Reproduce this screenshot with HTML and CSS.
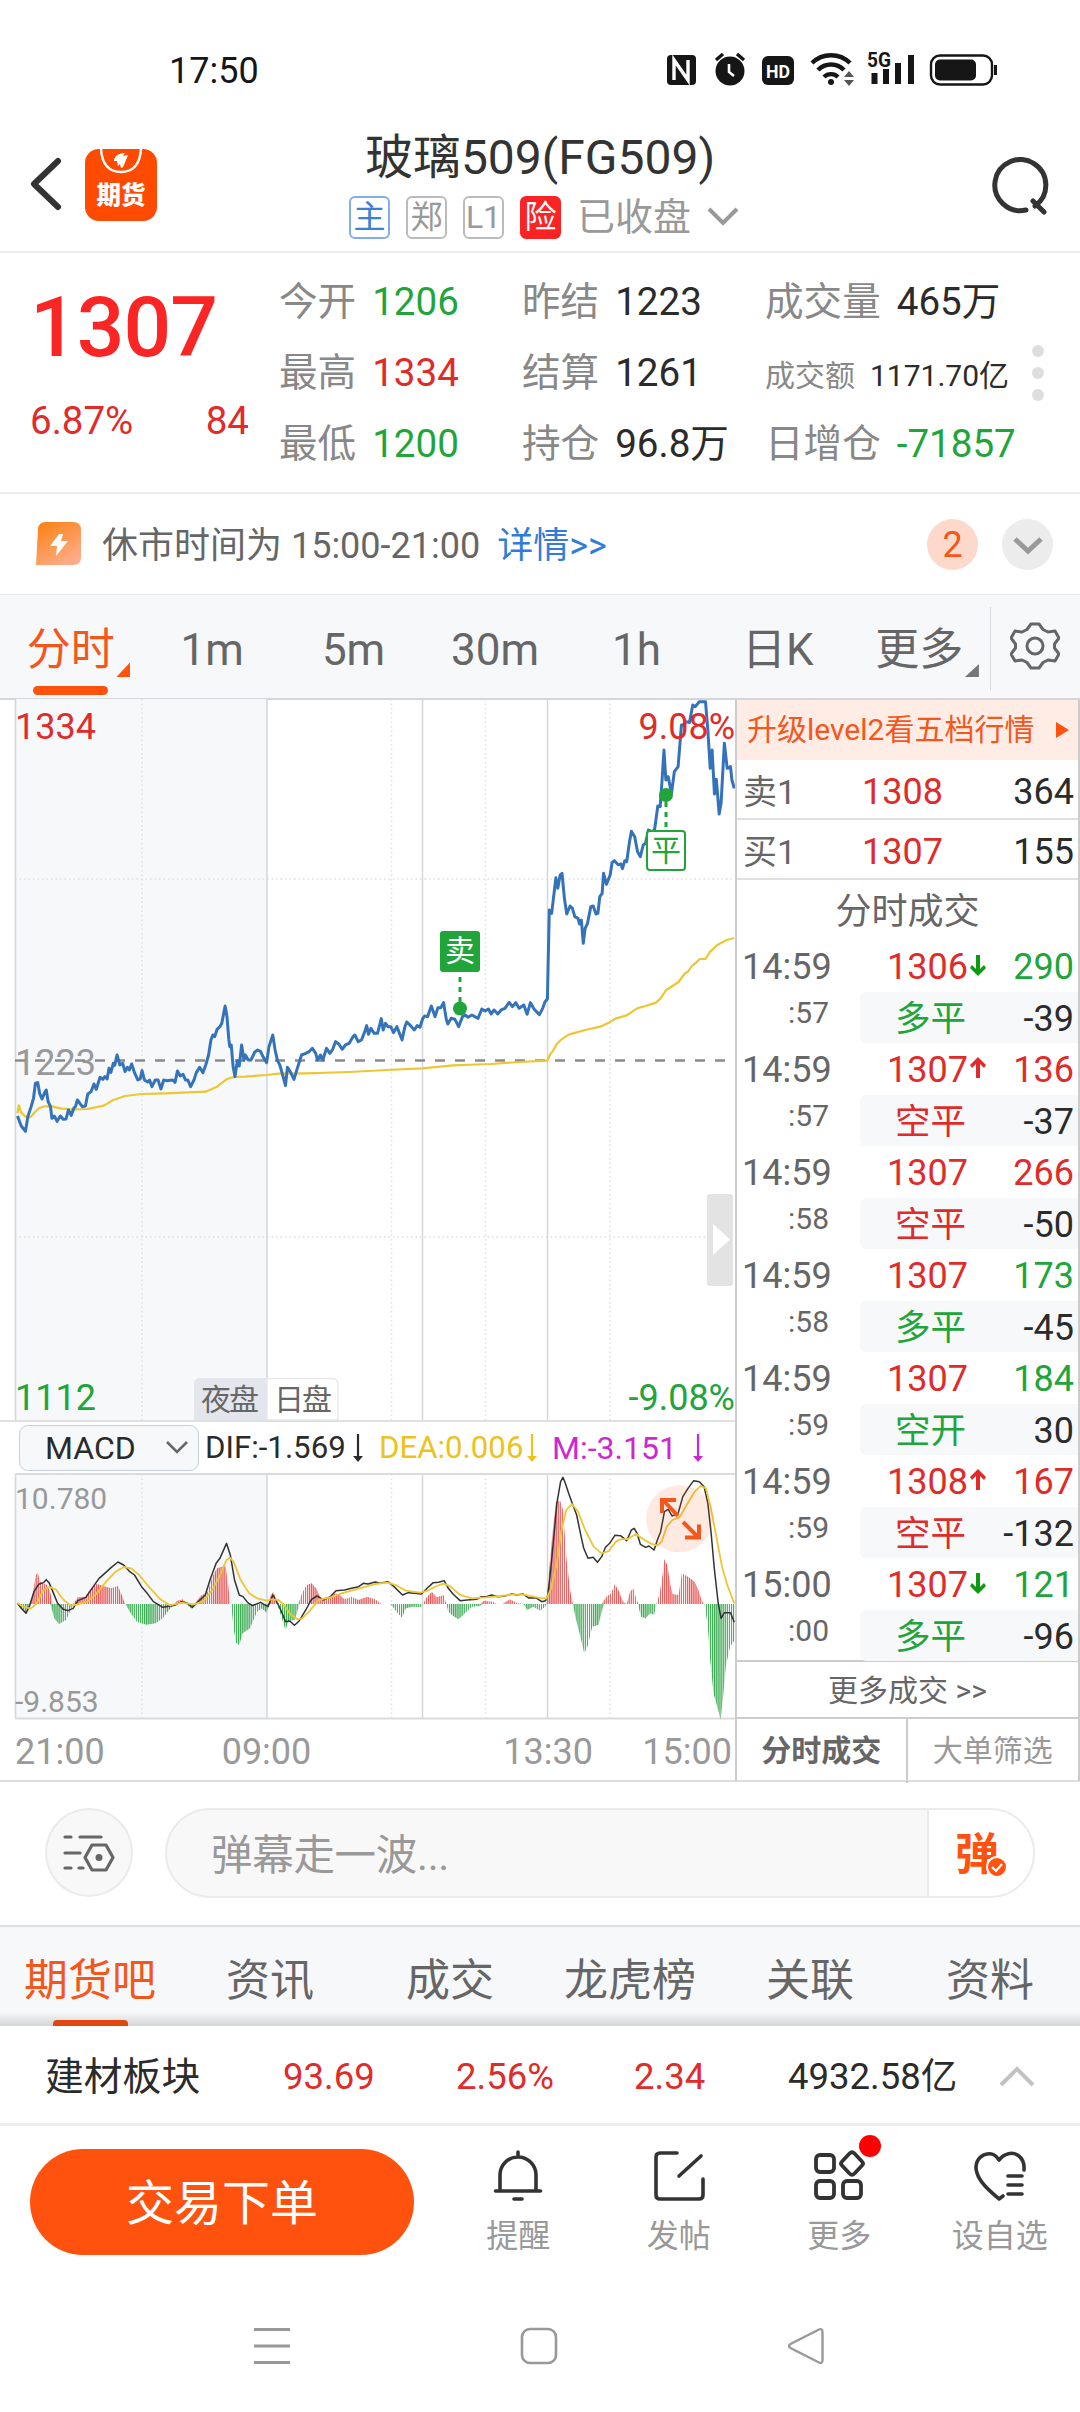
FILE: index.html
```html
<!DOCTYPE html>
<html lang="zh-CN">
<head>
<meta charset="utf-8">
<meta name="viewport" content="width=1080">
<title>玻璃509(FG509)</title>
<link rel="stylesheet" href="styles.css">
</head>
<body>
<div class="screen">

  <div class="status">
    <span class="clock">17:50</span>
    <svg class="status-icons" width="340" height="44" viewBox="660 46 340 44">
      <rect x="667" y="55" width="29" height="30" rx="4" fill="#161616"/>
      <path d="M674 80V60l14 20V60" fill="none" stroke="#fff" stroke-width="3.4"/>
      <circle cx="730" cy="71" r="14.5" fill="#161616"/>
      <path d="M716 60l7-6M744 60l-7-6" stroke="#161616" stroke-width="3.4"/>
      <path d="M729 64v8l5 4" fill="none" stroke="#fff" stroke-width="2.6"/>
      <rect x="762" y="56" width="32" height="29" rx="6" fill="#161616"/>
      <text x="778" y="77.500" text-anchor="middle" font-size="19" font-weight="700" fill="#fff" textLength="24" lengthAdjust="spacingAndGlyphs">HD</text>
      <g fill="none" stroke="#161616" stroke-width="4.400">
        <path d="M812 63a27 27 0 0 1 38 0"/>
        <path d="M818 70a18 18 0 0 1 26 0"/>
        <path d="M824 77a10 10 0 0 1 14 0"/>
      </g>
      <circle cx="831" cy="82" r="3" fill="#161616"/>
      <path d="M844 77l5-6 5 6zM844 80l5 6 5-6z" fill="#555"/>
      <text x="867" y="67" font-size="20" font-weight="700" fill="#161616" textLength="24" lengthAdjust="spacingAndGlyphs">5G</text>
      <path d="M874.500 73v11M886 69v15M898 63v21M911 55v29" stroke="#161616" stroke-width="6" fill="none"/>
      <rect x="931" y="55.500" width="61" height="29" rx="9" fill="none" stroke="#161616" stroke-width="2.400"/>
      <rect x="935" y="59.500" width="41" height="21" rx="5" fill="#161616"/>
      <path d="M995.500 65v10" stroke="#161616" stroke-width="3"/>
    </svg>
  </div>

  <header class="header">
    <svg class="back" width="34" height="56" viewBox="0 0 34 56"><path d="M29 4L5 27l24 23" fill="none" stroke="#333" stroke-width="6" stroke-linecap="round" stroke-linejoin="round"/></svg>
    <div class="logo">
      <svg width="72" height="26" viewBox="0 0 72 26"><path d="M16 0c1 15 8 23 20 23S55 15 56 0" fill="none" stroke="#fff" stroke-width="2.400"/><path d="M29 12c0-4 4-8 11-8l-2 3 5-1-4 10c-1 3-3 3-3 3l-1-4-2 2-1-5z" fill="#fff"/></svg>
      <b>期货</b>
    </div>
    <div class="heading">
      <h1>玻璃509(FG509)</h1>
      <div class="tags">
        <span class="tag blue">主</span><span class="tag">郑</span><span class="tag">L1</span><span class="tag risk">险</span>
        <span class="state">已收盘</span>
        <svg width="32" height="20" viewBox="0 0 32 20"><path d="M2 2l14 14L30 2" fill="none" stroke="#999" stroke-width="4"/></svg>
      </div>
    </div>
    <svg class="search" width="60" height="60" viewBox="0 0 60 60"><path d="M36 53A25.500 25.500 0 1 1 45 49M43 44l11 11" fill="none" stroke="#333" stroke-width="5" stroke-linecap="round"/></svg>
  </header>

  <section class="quote">
    <div class="last">
      <strong>1307</strong>
      <div class="change"><span>6.87%</span><span>84</span></div>
    </div>
    <dl class="stats">
      <div><dt>今开</dt><dd class="down">1206</dd></div>
      <div><dt>昨结</dt><dd>1223</dd></div>
      <div><dt>成交量</dt><dd>465万</dd></div>
      <div><dt>最高</dt><dd class="up">1334</dd></div>
      <div><dt>结算</dt><dd>1261</dd></div>
      <div class="small"><dt>成交额</dt><dd>1171.70亿</dd></div>
      <div><dt>最低</dt><dd class="down">1200</dd></div>
      <div><dt>持仓</dt><dd>96.8万</dd></div>
      <div><dt>日增仓</dt><dd class="down">-71857</dd></div>
    </dl>
    <div class="dots"><i></i><i></i><i></i></div>
  </section>

  <section class="notice">
    <svg width="46" height="44" viewBox="0 0 46 44">
      <defs><linearGradient id="bolt" x1="0" y1="0" x2=".6" y2="1"><stop offset="0" stop-color="#fb7f0c"/><stop offset="1" stop-color="#ffab86"/></linearGradient></defs>
      <path d="M10 0h27q8 0 8 8v27q0 8-8 8H0L2 8q0-8 8-8z" fill="url(#bolt)"/>
      <path d="M23 12l-9 12h7l-1 10 12-15h-7l2-7z" fill="#fff"/>
    </svg>
    <span class="notice-text">休市时间为 15:00-21:00</span>
    <a>详情&gt;&gt;</a>
    <span class="count">2</span>
    <span class="more"><svg width="32" height="20" viewBox="0 0 32 20"><path d="M3 3l13 12L29 3" fill="none" stroke="#999" stroke-width="5"/></svg></span>
  </section>

  <nav class="periods">
    <span class="on">分时</span><span>1m</span><span>5m</span><span>30m</span><span>1h</span><span>日K</span><span class="drop">更多</span>
    <div class="gear"><svg width="50" height="52" viewBox="-25 -26 50 52"><path d="M-4-22h8l4 5.500 5 2.500 7-1 4 7-4.500 6 0 4 4.500 6-4 7-7-1-5 2.500-4 5.500H-4l-4-5.500-5-2.500-7 1-4-7 4.500-6 0-4-4.500-6 4-7 7 1 5-2.500z" fill="none" stroke="#666" stroke-width="3" stroke-linejoin="round"/><circle r="8" fill="none" stroke="#666" stroke-width="3"/></svg></div>
  </nav>

  <main class="market">
    <div class="charts">
      <svg class="price" width="735" height="721" viewBox="0 699 735 721">
        <rect x="15" y="699" width="252" height="721" fill="#f6f8fa"/>
        <path d="M142 699v721M391.500 699v721M485.500 699v721M610 699v721M15 879h720M15 1237h720" stroke="#dfdfdf" stroke-width="1.500" stroke-dasharray="1.500 3" fill="none"/>
        <path d="M15.500 699v721M267 699v721M422.500 699v721M547.500 699v721" stroke="#d4d6d9" stroke-width="1.500"/>
        <text x="15" y="1075" class="axis mute">1223</text>
        <path d="M15 1060.500h720" stroke="#8a8a8a" stroke-width="2.400" stroke-dasharray="10 10"/>
        <g transform="translate(0 880) scale(.4719 .3333)" fill="none" stroke-linejoin="round">
          <polyline vector-effect="non-scaling-stroke" stroke="#edc633" stroke-width="2.200" points="37,700 40,676 45,698 54,710 64,712 72,700 82,685 95,679 112,680 130,686 155,688 185,687 220,677 240,660 265,648 300,642 350,640 436,635 460,620 480,598 495,591 520,590 565,585 590,581 650,580 740,576 820,570 895,565 960,556 1040,552 1100,546 1160,542 1165,525 1172,512 1180,492 1190,478 1205,464 1220,458 1240,450 1272,440 1290,428 1306,415 1328,406 1350,385 1368,378 1390,368 1400,355 1412,330 1425,318 1438,306 1450,282 1458,275 1466,258 1475,248 1483,237 1495,237 1505,215 1520,195 1540,180 1556,174"/>
          <polyline vector-effect="non-scaling-stroke" stroke="#3473ba" stroke-width="3" points="37,708 45,738 54,754 59,710 66,680 71,655 75,610 80,608 84,640 89,657 94,640 98,630 102,665 107,680 110,715 115,708 121,724 128,708 134,718 140,717 145,690 151,706 157,683 160,680 164,660 170,672 175,680 181,678 186,642 193,635 199,612 204,628 212,592 218,598 222,590 227,597 231,565 235,577 240,550 243,556 248,525 254,555 260,550 265,575 270,562 274,570 279,552 285,578 292,600 297,597 301,572 306,600 313,606 317,600 322,620 329,600 335,600 341,627 347,600 353,602 366,600 371,607 376,573 382,588 388,583 393,600 398,600 404,620 411,600 416,578 423,562 430,578 436,555 442,525 447,480 451,465 455,470 460,448 466,440 470,430 477,378 481,410 485,480 487,500 490,495 494,560 498,590 503,542 507,558 512,495 517,540 520,525 526,540 532,540 540,516 546,510 552,514 558,532 565,548 570,500 578,465 583,510 588,542 593,555 598,580 605,617 609,562 615,575 623,598 630,565 639,525 648,520 655,515 662,505 669,520 673,540 679,525 684,540 692,505 699,520 705,508 711,485 718,492 725,508 732,495 740,490 748,470 752,465 759,485 766,480 773,455 777,437 781,463 786,445 793,460 800,460 808,416 812,450 817,430 822,440 828,440 834,458 841,440 852,480 858,440 862,426 870,437 878,450 884,437 890,442 896,415 900,408 906,410 914,378 922,410 928,383 934,383 940,368 946,420 949,432 956,415 964,418 972,440 980,410 986,405 992,412 1000,405 1013,415 1021,387 1028,393 1035,387 1041,402 1047,390 1055,402 1062,390 1070,385 1079,367 1086,380 1093,368 1100,385 1110,375 1117,403 1124,368 1132,388 1143,404 1150,385 1155,365 1160,357 1164,90 1169,100 1178,-7 1182,25 1187,-15 1191,-20 1196,55 1201,102 1208,78 1213,85 1218,110 1225,115 1228,132 1232,120 1236,190 1240,145 1245,130 1252,80 1257,78 1263,102 1267,100 1271,50 1276,40 1279,-20 1285,13 1293,-15 1297,-52 1302,-58 1310,-46 1316,-48 1319,-34 1324,-58 1328,-55 1334,-115 1338,-146 1345,-130 1351,-85 1357,-70 1363,-105 1368,-110 1374,-150 1381,-145 1387,-150 1394,-222 1399,-220 1403,-300 1407,-390 1411,-300 1416,-310 1423,-260 1429,-325 1437,-340 1444,-465 1448,-465 1454,-475 1461,-472 1468,-525 1473,-520 1482,-535 1495,-535 1500,-450 1505,-335 1509,-390 1514,-258 1518,-302 1524,-198 1528,-230 1535,-410 1541,-335 1548,-340 1551,-300 1556,-275"/>
        </g>
        <path d="M460 977v28M666 802v28" stroke="#21a53b" stroke-width="3" stroke-dasharray="5 5"/>
        <circle cx="460" cy="1008.500" r="7" fill="#21a53b"/>
        <circle cx="666" cy="795" r="7" fill="#21a53b"/>
        <rect x="440" y="931" width="40" height="41" rx="3" fill="#21a53b"/>
        <text x="460" y="961" text-anchor="middle" font-size="30" fill="#fff">卖</text>
        <rect x="647" y="831" width="38" height="39" rx="3" fill="#fff" stroke="#21a53b" stroke-width="2"/>
        <text x="666" y="861" text-anchor="middle" font-size="30" fill="#21a53b">平</text>
        <text x="15" y="739" class="axis rise">1334</text>
        <text x="735" y="739" text-anchor="end" class="axis rise">9.08%</text>
        <text x="15" y="1410" class="axis fall">1112</text>
        <text x="735" y="1410" text-anchor="end" class="axis fall">-9.08%</text>
        <path d="M267 1378h-67q-6 0-6 6v36h73z" fill="#e3e6ed"/>
        <path d="M267 1378.500h65q6 0 6 6v35.500h-71z" fill="#fff" stroke="#e9e9ec" stroke-width="1.500"/>
        <text x="201" y="1410" font-size="30" fill="#666" textLength="58">夜盘</text>
        <text x="274" y="1410" font-size="30" fill="#666" textLength="58">日盘</text>
        <rect x="707" y="1194" width="26" height="92" rx="3" fill="#e3e3e3"/>
        <path d="M713 1224l17 15.500-17 15.500z" fill="#fff"/>
      </svg>

      <div class="indicator">
        <span class="pick">MACD<svg width="24" height="16" viewBox="0 0 24 16"><path d="M2 2l10 10L22 2" fill="none" stroke="#666" stroke-width="2.600"/></svg></span>
        <span class="val dif">DIF:-1.569<svg width="10" height="28" viewBox="0 0 10 28"><path d="M5 0v24" stroke="currentColor" stroke-width="2.200"/><path d="M0 22h10l-5 6z" fill="currentColor"/></svg></span>
        <span class="val dea">DEA:0.006<svg width="10" height="28" viewBox="0 0 10 28"><path d="M5 0v24" stroke="currentColor" stroke-width="2.200"/><path d="M0 22h10l-5 6z" fill="currentColor"/></svg></span>
        <span class="val bar">M:-3.151<svg width="10" height="28" viewBox="0 0 10 28"><path d="M5 0v24" stroke="currentColor" stroke-width="2.200"/><path d="M0 22h10l-5 6z" fill="currentColor"/></svg></span>
      </div>

      <svg class="macd" width="735" height="247" viewBox="0 1473 735 247">
        <defs>
          <pattern id="redbar" width="4.425" height="900" patternUnits="userSpaceOnUse"><rect width="2.700" height="900" fill="#e85a5a"/></pattern>
          <pattern id="greenbar" width="4.425" height="900" patternUnits="userSpaceOnUse"><rect width="2.700" height="900" fill="#3fac55"/></pattern>
        </defs>
        <rect x="15" y="1474" width="252" height="245" fill="#f6f8fa"/>
        <path d="M142 1474v245M391.500 1474v245M485.500 1474v245M610 1474v245" stroke="#dfdfdf" stroke-width="1.500" stroke-dasharray="1.500 3"/>
        <path d="M15.500 1474v245M267 1474v245M422.500 1474v245M547.500 1474v245" stroke="#d4d6d9" stroke-width="1.500"/>
        <path d="M15 1474h720M15 1718.500h720" stroke="#d9dbdd" stroke-width="2"/>
        <text x="15" y="1509" class="axis low">10.780</text>
        <text x="15" y="1711.500" class="axis low">-9.853</text>
        <g transform="translate(0 1460) scale(.4719 .3333)" stroke-linejoin="round">
          <path fill="url(#redbar)" d="M64,432 70,400 76,345 80,338 85,365 100,375 107,400 111,432zM155,432 165,412 180,410 190,390 205,372 235,385 250,378 258,405 265,432zM370,432 375,422 388,418 395,432zM412,432 425,408 440,395 450,350 460,325 470,320 478,318 484,380 488,432zM568,432 574,405 579,395 585,415 590,432zM632,432 640,400 650,375 660,370 670,385 680,415 700,412 710,400 720,405 730,418 745,410 760,420 778,410 795,418 808,432zM896,432 905,410 915,395 925,412 940,405 946,432zM1018,432 1025,422 1045,425 1052,432zM1065,432 1080,418 1095,428 1110,432zM1158,432 1163,340 1170,230 1178,125 1187,122 1193,150 1200,290 1208,390 1214,432zM1275,432 1285,410 1295,400 1303,372 1312,395 1320,425 1328,432 1335,395 1342,385 1348,415 1353,432zM1391,432 1398,400 1404,345 1408,297 1414,315 1420,370 1425,402 1438,405 1445,340 1458,350 1472,365 1480,390 1488,425 1493,432z"/>
          <path fill="url(#greenbar)" d="M37,432 48,450 55,460 62,440 64,432zM107,432 115,475 125,492 140,480 150,450 155,432zM266,432 275,455 290,485 310,494 330,490 345,475 358,450 370,432zM395,432 407,448 412,432zM490,432 495,505 500,548 507,555 514,520 530,505 537,480 545,455 555,445 565,458 570,432zM588,432 596,470 605,510 612,482 625,480 632,445 634,432zM828,432 840,455 852,473 860,445 875,440 893,442 896,432zM946,432 950,455 960,468 972,478 985,460 1000,440 1018,437 1022,432zM1110,432 1117,450 1130,440 1145,452 1155,440 1158,432zM1214,432 1220,475 1230,530 1238,580 1245,560 1255,500 1268,495 1276,450 1280,432zM1352,432 1358,470 1368,475 1378,460 1386,465 1391,432zM1493,432 1500,500 1505,600 1512,700 1520,740 1527,779 1533,700 1538,620 1547,560 1556,542 1557,432z"/>
          <g fill="none">
            <polyline vector-effect="non-scaling-stroke" stroke="#333" stroke-width="1.500" points="37,430 45,445 55,460 62,440 72,395 82,373 92,368 98,359 104,368 112,395 122,430 134,448 144,452 155,445 165,422 182,412 195,385 210,355 222,340 236,322 250,306 262,315 275,335 285,345 300,380 312,400 325,425 345,442 370,436 385,425 395,428 408,442 420,425 435,405 445,360 458,310 466,295 480,250 488,285 497,360 507,405 515,410 525,428 535,437 552,427 568,440 578,405 590,435 598,460 605,485 614,483 624,496 634,483 648,450 660,418 672,408 685,420 700,410 712,392 730,390 745,385 760,380 770,370 780,372 795,366 806,370 822,365 835,380 853,405 865,398 878,400 893,402 905,385 918,368 930,367 941,362 950,385 960,402 975,422 990,420 1010,418 1020,410 1030,410 1042,405 1055,410 1070,408 1085,402 1095,405 1108,402 1120,414 1135,413 1148,425 1156,422 1161,405 1167,330 1173,240 1180,130 1188,65 1193,52 1198,70 1205,100 1214,135 1222,165 1230,220 1237,265 1246,295 1257,292 1266,307 1275,290 1283,262 1292,250 1303,226 1315,227 1328,242 1338,210 1344,205 1350,220 1357,253 1368,262 1375,258 1386,270 1393,240 1400,215 1408,155 1416,148 1424,168 1437,160 1447,110 1458,85 1470,62 1482,65 1492,80 1500,130 1507,220 1514,330 1522,430 1528,475 1535,458 1548,458 1556,487"/>
            <polyline vector-effect="non-scaling-stroke" stroke="#edc633" stroke-width="1.800" points="37,430 50,440 65,446 78,430 92,390 105,381 118,388 135,420 150,437 165,433 185,425 205,400 225,365 245,335 262,321 278,325 295,345 315,380 340,418 360,436 385,428 410,433 430,425 450,390 465,350 480,300 487,293 495,305 510,360 528,400 545,415 565,422 575,418 590,420 602,435 615,462 630,478 640,475 655,455 675,420 700,412 720,402 745,392 770,382 795,372 822,368 838,375 860,392 890,398 905,393 925,378 940,371 955,380 975,405 1000,415 1030,412 1060,408 1090,403 1110,404 1140,413 1158,416 1168,385 1180,310 1190,210 1200,150 1212,132 1225,155 1240,210 1258,260 1275,280 1290,273 1305,245 1315,238 1330,237 1348,222 1360,235 1378,250 1393,257 1402,245 1413,200 1425,180 1440,172 1455,135 1472,95 1485,78 1496,85 1506,140 1518,230 1530,320 1540,370 1556,430"/>
          </g>
        </g>
        <circle cx="679.500" cy="1518.700" r="33.500" fill="#ff520e" fill-opacity=".12"/>
        <path d="M678 1516l-15-16M662 1513v-13h14M683 1522l15 15M685 1537.500h14v-13" fill="none" stroke="#f4571c" stroke-width="4"/>
      </svg>
      <div class="times"><span>21:00</span><span>09:00</span><span>13:30</span><span>15:00</span></div>
    </div>

    <aside class="book">
      <div class="upgrade">升级level2看五档行情<svg width="14" height="16" viewBox="0 0 14 16"><path d="M0 0l13 8-13 8z" fill="#ff520e"/></svg></div>
      <div class="level"><span>卖1</span><b>1308</b><i>364</i></div>
      <div class="level"><span>买1</span><b>1307</b><i>155</i></div>
      <div class="book-title">分时成交</div>
      <div class="ticks">
        <div class="tick"><time>14:59</time><b class="dn">1306</b><em class="down">290</em><small>:57</small><p><span class="down">多平</span><i>-39</i></p></div>
        <div class="tick"><time>14:59</time><b class="rs">1307</b><em class="up">136</em><small>:57</small><p><span class="up">空平</span><i>-37</i></p></div>
        <div class="tick"><time>14:59</time><b>1307</b><em class="up">266</em><small>:58</small><p><span class="up">空平</span><i>-50</i></p></div>
        <div class="tick"><time>14:59</time><b>1307</b><em class="down">173</em><small>:58</small><p><span class="down">多平</span><i>-45</i></p></div>
        <div class="tick"><time>14:59</time><b>1307</b><em class="down">184</em><small>:59</small><p><span class="down">空开</span><i>30</i></p></div>
        <div class="tick"><time>14:59</time><b class="rs">1308</b><em class="up">167</em><small>:59</small><p><span class="up">空平</span><i>-132</i></p></div>
        <div class="tick"><time>15:00</time><b class="dn">1307</b><em class="down">121</em><small>:00</small><p><span class="down">多平</span><i>-96</i></p></div>
      </div>
      <div class="more-ticks">更多成交 &gt;&gt;</div>
      <div class="switch"><b>分时成交</b><span>大单筛选</span></div>
    </aside>
  </main>

  <section class="danmu">
    <span class="danmu-set"><svg width="52" height="40" viewBox="0 0 52 40"><g fill="none" stroke="#666" stroke-width="3.200" stroke-linecap="round"><path d="M2 4h6M17 4h21M2 20h15M2 35h6M16 35h4"/><path d="M29 12h14l7 12.500-7 12.500H29l-7-12.500z" stroke-linejoin="round"/></g><circle cx="36" cy="24.500" r="3.500" fill="#666"/></svg></span>
    <div class="danmu-box">
      <span class="hint">弹幕走一波...</span>
      <span class="send"><b>弹</b><svg width="22" height="22" viewBox="0 0 22 22"><circle cx="11" cy="11" r="10" fill="#ff520e" stroke="#fff" stroke-width="2"/><path d="M6 11l4 4 6-7" fill="none" stroke="#fff" stroke-width="2.200"/></svg></span>
    </div>
  </section>

  <nav class="sections"><span class="on">期货吧</span><span>资讯</span><span>成交</span><span>龙虎榜</span><span>关联</span><span>资料</span></nav>

  <section class="sector">
    <span class="name">建材板块</span><span class="up">93.69</span><span class="up">2.56%</span><span class="up">2.34</span><span class="amount">4932.58亿</span>
    <svg width="36" height="22" viewBox="0 0 36 22"><path d="M2 19L18 3l16 16" fill="none" stroke="#c2c2c2" stroke-width="4"/></svg>
  </section>

  <footer class="actions">
    <button class="trade">交易下单</button>
    <div class="act">
      <svg width="56" height="56" viewBox="0 0 56 56"><g fill="none" stroke="#333" stroke-width="3.600" stroke-linecap="round"><path d="M28 4v5M10 42V27a18 18 0 0 1 36 0v15M5.500 43h45M24 51h8"/></g></svg>
      <span>提醒</span>
    </div>
    <div class="act">
      <svg width="56" height="56" viewBox="0 0 56 56"><g fill="none" stroke="#333" stroke-width="3.600" stroke-linecap="round" stroke-linejoin="round"><path d="M26 5H9q-4 0-4 4v38q0 4 4 4h39q4 0 4-4V31M28 28L50 8"/></g></svg>
      <span>发帖</span>
    </div>
    <div class="act hot">
      <svg width="56" height="56" viewBox="0 0 56 56"><g fill="none" stroke="#333" stroke-width="3.800" stroke-linejoin="round"><rect x="5" y="7" width="18" height="17" rx="4"/><rect x="5" y="33" width="18" height="17" rx="4"/><rect x="32" y="33" width="18" height="17" rx="4"/><path d="M38.500 5.500q2.500-2.500 5 0l7.500 8q2 2 0 4l-7.500 8q-2.500 2.500-5 0l-7.500-8q-2-2 0-4z"/></g></svg>
      <span>更多</span>
    </div>
    <div class="act">
      <svg width="56" height="56" viewBox="0 0 56 56"><g fill="none" stroke="#333" stroke-width="3.600" stroke-linecap="round" stroke-linejoin="round"><path d="M52 22c1-13-9-20-19-15-3 1-4 3-6 5-3-5-8-7-12-6C6 8 2 16 5 25c3 10 13 18 22 26l4-3M36 28h14M36 37h14M36 46h14"/></g></svg>
      <span>设自选</span>
    </div>
  </footer>

  <div class="sysnav">
    <svg width="38" height="38" viewBox="0 0 38 38"><path d="M1 2.500h36M1 19h36M1 35.500h36" stroke="#999" stroke-width="2.800"/></svg>
    <svg width="38" height="38" viewBox="0 0 38 38"><rect x="2" y="2" width="34" height="34" rx="8" fill="none" stroke="#999" stroke-width="2.600"/></svg>
    <svg width="38" height="38" viewBox="0 0 38 38"><path d="M32 2.500Q35.500 1 35.500 5v28q0 4-3.500 2.500L3.500 21q-3-2 0-4z" fill="none" stroke="#999" stroke-width="2.400"/></svg>
  </div>
</div>
</body>
</html>
```
FILE: styles.css
```css
* { box-sizing: border-box; margin: 0; padding: 0; }

body {
  width: 1080px;
  background: #fff;
  color: #2b2b2b;
  font-family: Roboto, "Noto Sans CJK SC", sans-serif;
}

svg { display: block; flex: none; }
i, em { font-style: normal; }
.up { color: #e02b2b; }
.down { color: #21a53b; }

.screen { width: 1080px; height: 2412px; overflow: hidden; display: flex; flex-direction: column; }

/* status bar */
.status { height: 140px; padding: 46px 80px 0 169px; display: flex; justify-content: space-between; align-items: flex-start; }
.clock { font-size: 36px; line-height: 50px; color: #161616; }

/* title bar */
.header { height: 113px; padding: 0 30px 0 29px; display: flex; align-items: flex-start; border-bottom: 2px solid #ededed; }
.back { margin-top: 17px; }
.logo { width: 72px; height: 72px; margin: 9px 0 0 22px; border-radius: 14px; background: #ff4a02; overflow: hidden; color: #fff; display: flex; flex-direction: column; align-items: center; }
.logo b { font-size: 24.500px; line-height: 42px; font-weight: 900; }
.heading { flex: 1; display: flex; flex-direction: column; align-items: center; margin: 0 61px 0 -6px; }
.heading h1 { font-size: 48px; line-height: 54px; margin-top: -9px; font-weight: 400; color: #333; }
.tags { display: flex; align-items: center; gap: 16px; margin-top: 9px; padding-left: 8px; }
.tag { width: 41px; height: 43px; border: 2px solid #bbb; border-radius: 6px; font-size: 32px; line-height: 38px; text-align: center; color: #999; }
.tag.blue { color: #3b7fd6; border-color: #7faee8; }
.tag.risk { color: #fff; background: #fb2424; border-color: #fb2424; }
.state { font-size: 38px; line-height: 46px; color: #999; }
.search { margin-top: 17px; }

/* quote */
.quote { height: 241px; border-bottom: 2px solid #ededed; display: flex; }
.last { width: 279px; padding: 28px 0 0 30px; }
.last strong { display: block; font-size: 84px; line-height: 93px; font-weight: 500; letter-spacing: -1px; color: #fa2626; }
.change { margin-top: 24px; width: 219px; display: flex; justify-content: space-between; font-size: 38.500px; line-height: 46px; color: #e02b2b; }
.stats { flex: 1; display: grid; grid-template-columns: 243px 243px 1fr; grid-auto-rows: 71px; padding-top: 13px; font-size: 38.600px; line-height: 72px; white-space: nowrap; }
.stats div { display: flex; gap: 16px; }
.stats dt { color: #888; }
.stats .small { font-size: 30px; gap: 15px; line-height: 77px; }
.dots { width: 48px; margin-left: -48px; padding-top: 92px; display: flex; flex-direction: column; gap: 10px; }
.dots i { width: 12px; height: 12px; border-radius: 50%; background: #dedede; }

/* notice */
.notice { height: 100px; padding: 0 27px 0 36px; display: flex; align-items: center; font-size: 36px; line-height: 50px; color: #666; }
.notice > span:nth-of-type(1), .notice a { padding-top: 3px; }
.notice-text { margin-left: 20px; }
.notice a { margin-left: 17px; color: #2f7dd8; }
.count { margin-left: auto; width: 51px; height: 51px; border-radius: 50%; background: #fdd9cc; color: #f4571c; text-align: center; line-height: 53px; }
.more { margin-left: 24px; width: 51px; height: 51px; border-radius: 50%; background: #ececec; display: flex; align-items: center; justify-content: center; padding-top: 3px; }

/* period tabs */
.periods { height: 106px; background: #f7f8fa; border-top: 1px solid #ececec; border-bottom: 2px solid #d3d6da; display: flex; font-size: 44px; line-height: 111px; color: #666; }
.periods > span { position: relative; flex: 1; text-align: center; }
.periods .on { color: #f4571c; }
.periods .on::before { content: ""; position: absolute; left: 33px; bottom: 3px; width: 75px; height: 9px; border-radius: 5px; background: #ff520e; }
.periods .on::after, .periods .drop::after { content: ""; position: absolute; right: 11px; bottom: 21px; width: 14px; height: 15px; background: #ff520e; clip-path: polygon(100% 0, 100% 100%, 0 100%); }
.periods .drop::after { background: #777; height: 13px; }
.gear { width: 90px; margin: 12px 0 8px; border-left: 1px solid #d8dadd; display: flex; align-items: center; justify-content: center; padding-bottom: 5px; }

/* charts and order book */
.market { height: 1082px; display: grid; grid-template-columns: 735px 345px; border-bottom: 2px solid #dcdee0; }
.charts { height: 1081px; margin-top: -1px; }
.axis { font-size: 36px; }
.axis.low { font-size: 30px; fill: #999; }
.mute { fill: #999; }
.rise { fill: #e02b2b; }
.fall { fill: #21a53b; }
.indicator { height: 53px; border-top: 2px solid #dfe0e2; display: flex; align-items: center; padding-left: 19px; font-size: 32px; line-height: 42px; color: #2b2b2b; }
.pick { width: 180px; height: 46px; border: 1px solid #c9cfd8; border-radius: 9px; background: #f7f8fa; display: flex; align-items: center; justify-content: space-between; padding: 0 9px 0 25px; }
.val { display: flex; align-items: center; justify-content: space-between; white-space: nowrap; font-size: 31.200px; }
.val.dif { width: 158px; margin-left: 6px; }
.val.dea { width: 158px; margin-left: 16px; color: #eec21d; }
.val.bar { width: 151px; margin-left: 15px; color: #cf27cf; font-size: 32px; }
.times { padding: 9px 3px 0 15px; display: flex; font-size: 36px; line-height: 46px; color: #999; }
.times span:nth-child(2) { margin-left: 117px; }
.times span:nth-child(3) { margin-left: 192px; }
.times span:nth-child(4) { margin-left: auto; }

.book { border-left: 2px solid #ccc; border-right: 2px solid #ccc; height: 1081px; font-size: 36px; }
.book b { font-weight: 400; }
.upgrade { height: 60px; background: #ffece4; color: #f4571c; font-size: 30px; line-height: 64px; padding: 0 8px 0 10px; display: flex; justify-content: space-between; align-items: center; white-space: nowrap; }
.level { height: 60px; border-bottom: 2px solid #dfe0e2; line-height: 65px; display: grid; grid-template-columns: 78px 122px 1fr; padding: 0 4px 0 6px; }
.level span { color: #666; font-size: 34px; }
.level b { text-align: right; color: #e02b2b; }
.level i { text-align: right; }
.book-title { height: 60px; line-height: 64px; text-align: center; color: #666; }
.ticks { height: 720px; }
.tick { height: 103px; display: grid; grid-template-columns: 92px 31px 108px 1fr; grid-template-rows: 52px 51px; line-height: 54px; }
.tick time { color: #666; padding-left: 5px; }
.tick > b { grid-column: 2 / 4; text-align: right; color: #e02b2b; position: relative; }
.tick > em { text-align: right; padding-right: 4px; }
.tick small { font-size: 30px; line-height: 41px; color: #666; text-align: right; }
.tick p { grid-column: 3 / 5; background: #f7f8fa; border-radius: 6px 0 0 6px; display: flex; justify-content: space-between; padding: 0 4px 0 35px; line-height: 55px; }
.tick p span { font-size: 35.500px; }
.tick p i { line-height: 55px; }
.dn::after, .rs::after { content: ""; position: absolute; left: 141px; top: 15px; width: 16px; height: 21px; background: #0c9a12; clip-path: polygon(6px 0, 10px 0, 10px 14px, 14px 10px, 16px 13px, 8px 21px, 0 13px, 2px 10px, 6px 14px); }
.rs::after { background: #e02b2b; transform: scaleY(-1); top: 14px; }
.more-ticks { height: 59px; border-top: 2px solid #ccc; border-bottom: 2px solid #ccc; font-size: 30px; line-height: 58px; text-align: center; color: #666; }
.switch { height: 62px; display: grid; grid-template-columns: 1fr 1fr; font-size: 30px; line-height: 64px; text-align: center; color: #999; }
.switch b { font-weight: 700; color: #666; border-right: 2px solid #ccc; }

/* comment bar */
.danmu { height: 143px; padding: 26px 45px 0; display: flex; gap: 32px; }
.danmu-set { width: 88px; height: 89px; border: 2px solid #ebebeb; border-radius: 50%; background: #f8f8f8; display: flex; align-items: center; justify-content: center; }
.danmu-box { flex: 1; height: 90px; border: 2px solid #ebebeb; border-radius: 45px; overflow: hidden; display: flex; background: #f8f8f8; font-size: 41.500px; line-height: 92px; color: #999; }
.hint { flex: 1; padding-left: 44px; letter-spacing: -.3px; }
.send { position: relative; width: 106px; background: #fff; border-left: 2px solid #ebebeb; color: #ff520e; padding-left: 26px; }
.send b { font-size: 44px; line-height: 84px; font-weight: 700; }
.send svg { position: absolute; left: 57px; top: 46px; }

/* section tabs */
.sections { height: 101px; border-top: 2px solid #dcdee0; background: linear-gradient(#f7f8fa 86%, #d2d4d6); display: grid; grid-template-columns: repeat(6, 1fr); grid-template-rows: 99px; font-size: 44px; line-height: 108px; text-align: center; color: #666; }
.sections span { position: relative; }
.sections .on { color: #f4571c; }
.sections .on::after { content: ""; position: absolute; left: 53px; bottom: 0; width: 75px; height: 6px; border-radius: 4px 4px 0 0; background: #e2480e; }

/* sector summary */
.sector { height: 100px; border-bottom: 3px solid #ededed; display: grid; grid-template-columns: 238px 173px 178px 154px 211px 36px; align-items: center; padding: 2px 0 0 45px; font-size: 36.500px; line-height: 97px; }
.sector .name { font-size: 38.800px; }

/* actions */
.actions { height: 170px; display: flex; padding: 23px 0 0 30px; }
.trade { width: 384px; height: 106px; margin-right: 24px; border: 0; border-radius: 53px; background: #ff520e; color: #fff; font: 400 48px/110px Roboto, "Noto Sans CJK SC", sans-serif; }
.act { position: relative; width: 160.500px; display: flex; flex-direction: column; align-items: center; font-size: 32px; color: #999; }
.act span { line-height: 44px; margin-top: 10px; }
.act svg { margin-top: -1px; }
.hot::after { content: ""; position: absolute; left: 100px; top: -14px; width: 22px; height: 22px; border-radius: 50%; background: #f00; }

.sysnav { padding: 31px 255px 0 253px; display: flex; justify-content: space-between; }
```
